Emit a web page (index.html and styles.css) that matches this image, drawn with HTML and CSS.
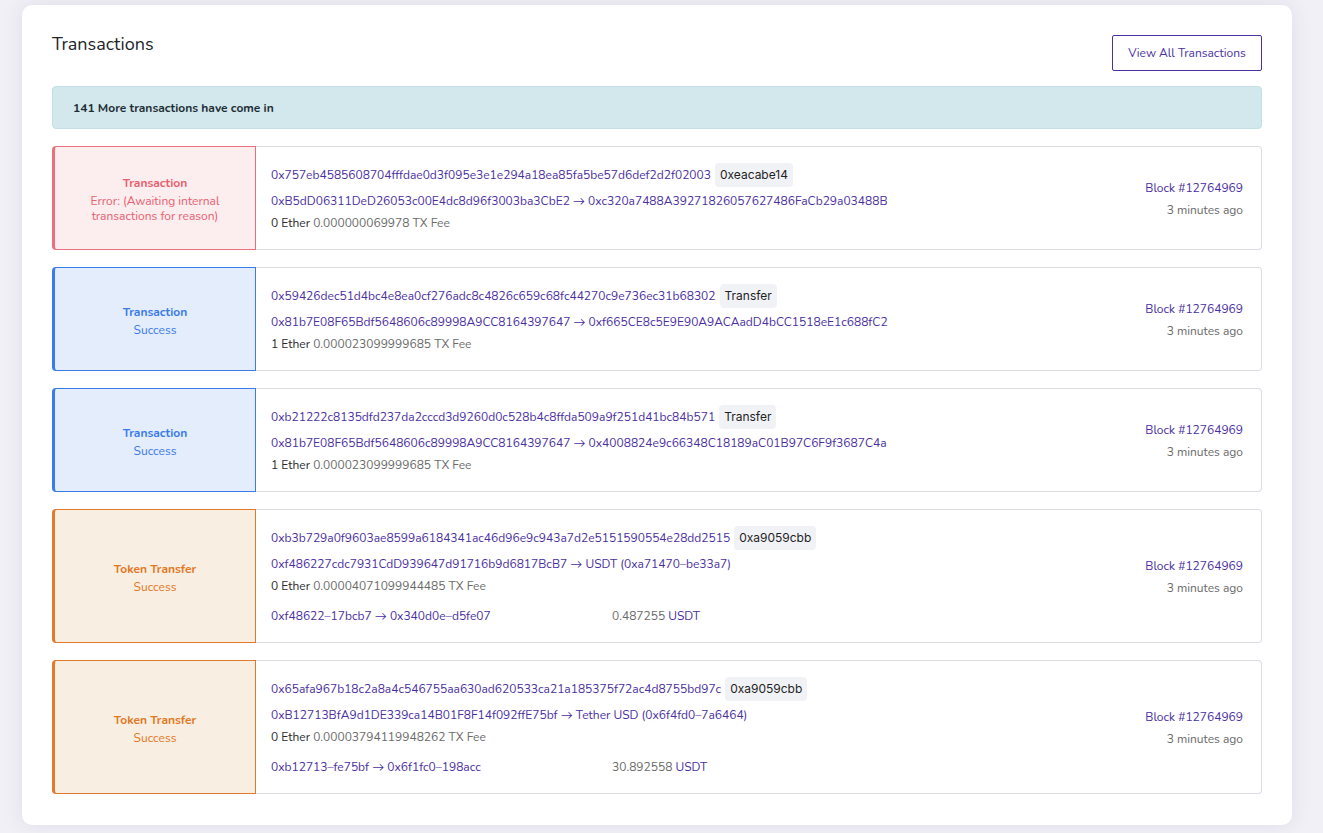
FILE: index.html
```html
<!DOCTYPE html>
<html>
<head>
<meta charset="utf-8">
<link rel="stylesheet" href="styles.css">
</head>
<body>
<div class="panel">
  <div class="header">
    <h1 class="title">Transactions</h1>
    <a class="btn">View All Transactions</a>
  </div>
  <div class="banner">141 More transactions have come in</div>

  <div class="tx">
    <div class="tile error">
      <div class="tile-title">Transaction</div>
      <div class="tile-status">Error: (Awaiting internal transactions for reason)</div>
    </div>
    <div class="body">
      <div class="main">
        <div class="row-hash"><a class="link">0x757eb4585608704fffdae0d3f095e3e1e294a18ea85fa5be57d6def2d2f02003</a><span class="pill">0xeacabe14</span></div>
        <div class="row"><a class="link">0xB5dD06311DeD26053c00E4dc8d96f3003ba3CbE2</a> <span class="arrow">&rarr;</span> <a class="link">0xc320a7488A39271826057627486FaCb29a03488B</a></div>
        <div class="row"><span class="dark">0 Ether</span> <span class="gray">0.000000069978 TX Fee</span></div>
      </div>
      <div class="side">
        <a class="link">Block #12764969</a>
        <div class="gray">3 minutes ago</div>
      </div>
    </div>
  </div>

  <div class="tx">
    <div class="tile ok">
      <div class="tile-title">Transaction</div>
      <div class="tile-status">Success</div>
    </div>
    <div class="body">
      <div class="main">
        <div class="row-hash"><a class="link">0x59426dec51d4bc4e8ea0cf276adc8c4826c659c68fc44270c9e736ec31b68302</a><span class="pill">Transfer</span></div>
        <div class="row"><a class="link">0x81b7E08F65Bdf5648606c89998A9CC8164397647</a> <span class="arrow">&rarr;</span> <a class="link">0xf665CE8c5E9E90A9ACAadD4bCC1518eE1c688fC2</a></div>
        <div class="row"><span class="dark">1 Ether</span> <span class="gray">0.000023099999685 TX Fee</span></div>
      </div>
      <div class="side">
        <a class="link">Block #12764969</a>
        <div class="gray">3 minutes ago</div>
      </div>
    </div>
  </div>

  <div class="tx">
    <div class="tile ok">
      <div class="tile-title">Transaction</div>
      <div class="tile-status">Success</div>
    </div>
    <div class="body">
      <div class="main">
        <div class="row-hash"><a class="link">0xb21222c8135dfd237da2cccd3d9260d0c528b4c8ffda509a9f251d41bc84b571</a><span class="pill">Transfer</span></div>
        <div class="row"><a class="link">0x81b7E08F65Bdf5648606c89998A9CC8164397647</a> <span class="arrow">&rarr;</span> <a class="link">0x4008824e9c66348C18189aC01B97C6F9f3687C4a</a></div>
        <div class="row"><span class="dark">1 Ether</span> <span class="gray">0.000023099999685 TX Fee</span></div>
      </div>
      <div class="side">
        <a class="link">Block #12764969</a>
        <div class="gray">3 minutes ago</div>
      </div>
    </div>
  </div>

  <div class="tx">
    <div class="tile token">
      <div class="tile-title">Token Transfer</div>
      <div class="tile-status">Success</div>
    </div>
    <div class="body">
      <div class="main">
        <div class="row-hash"><a class="link">0xb3b729a0f9603ae8599a6184341ac46d96e9c943a7d2e5151590554e28dd2515</a><span class="pill">0xa9059cbb</span></div>
        <div class="row"><a class="link">0xf486227cdc7931CdD939647d91716b9d6817BcB7</a> <span class="arrow">&rarr;</span> <a class="link">USDT (0xa71470&ndash;be33a7)</a></div>
        <div class="row"><span class="dark">0 Ether</span> <span class="gray">0.00004071099944485 TX Fee</span></div>
        <div class="token-row">
          <div class="token-addr"><a class="link">0xf48622&ndash;17bcb7</a> <span class="arrow">&rarr;</span> <a class="link">0x340d0e&ndash;d5fe07</a></div>
          <div><span class="gray">0.487255</span> <a class="link">USDT</a></div>
        </div>
      </div>
      <div class="side">
        <a class="link">Block #12764969</a>
        <div class="gray">3 minutes ago</div>
      </div>
    </div>
  </div>

  <div class="tx">
    <div class="tile token">
      <div class="tile-title">Token Transfer</div>
      <div class="tile-status">Success</div>
    </div>
    <div class="body">
      <div class="main">
        <div class="row-hash"><a class="link">0x65afa967b18c2a8a4c546755aa630ad620533ca21a185375f72ac4d8755bd97c</a><span class="pill">0xa9059cbb</span></div>
        <div class="row"><a class="link">0xB12713BfA9d1DE339ca14B01F8F14f092ffE75bf</a> <span class="arrow">&rarr;</span> <a class="link">Tether USD (0x6f4fd0&ndash;7a6464)</a></div>
        <div class="row"><span class="dark">0 Ether</span> <span class="gray">0.00003794119948262 TX Fee</span></div>
        <div class="token-row">
          <div class="token-addr"><a class="link">0xb12713&ndash;fe75bf</a> <span class="arrow">&rarr;</span> <a class="link">0x6f1fc0&ndash;198acc</a></div>
          <div><span class="gray">30.892558</span> <a class="link">USDT</a></div>
        </div>
      </div>
      <div class="side">
        <a class="link">Block #12764969</a>
        <div class="gray">3 minutes ago</div>
      </div>
    </div>
  </div>
</div>
</body>
</html>
```

FILE: styles.css
```css
* { box-sizing: border-box; }
html, body { margin: 0; padding: 0; }
body {
  background: #f1f0f6;
  font-family: "Nunito", "Lato", "Noto Sans", sans-serif;
  font-size: 12px;
  color: #333;
  height: 833px;
  overflow: hidden;
}
.panel {
  margin: 5px 0 0 22px;
  width: 1270px;
  height: 820px;
  background: #fff;
  border-radius: 10px;
  padding: 30px 30px;
  box-shadow: 0 0 18px rgba(200, 198, 222, 0.45);
}
.header {
  display: flex;
  justify-content: space-between;
  align-items: flex-start;
  height: 36px;
}
.title {
  margin: 0;
  font-size: 18px;
  font-weight: 400;
  line-height: 18px;
  color: #212529;
}
.btn {
  display: block;
  height: 36px;
  width: 150px;
  border: 1px solid #4b32a3;
  border-radius: 2px;
  color: #4b32a3;
  font-size: 12px;
  line-height: 34px;
  text-align: center;
}
.banner {
  margin-top: 15px;
  height: 43px;
  line-height: 41px;
  background: #d3e8ec;
  border: 1px solid #c2e0e6;
  border-radius: 4px;
  padding: 1px 20px 0;
  font-weight: 700;
  color: #1e2e36;
}
.tx {
  display: flex;
  margin-top: 17px;
}
.tile {
  width: 204px;
  flex: none;
  display: flex;
  flex-direction: column;
  justify-content: center;
  align-items: center;
  text-align: center;
  border: 1px solid;
  border-left-width: 3px;
  border-radius: 4px 0 0 4px;
  padding: 2px 24px 0;
}
.tile-title { font-weight: 700; line-height: 18px; }
.tile-status { line-height: 15px; margin-top: 2px; }
.tile.error { background: #fcedef; border-color: #e9707c; color: #e8606f; }
.tile.ok { background: #e3edfc; border-color: #3a7ce9; color: #3a7be8; }
.tile.token { background: #f9eee2; border-color: #e3792a; color: #e17822; }
.body {
  flex: 1;
  display: flex;
  align-items: center;
  border: 1px solid #dcdce3;
  border-left: none;
  border-radius: 0 4px 4px 0;
  padding: 16px 18px 15px 15px;
}
.main { flex: 1; }
.row-hash {
  display: flex;
  align-items: center;
  height: 24px;
}
.row { line-height: 22px; }
.row-hash + .row { margin-top: 3px; }
.link { color: #4a2f9f; text-decoration: none; }
.arrow { color: #4a2f9f; }
.dark { color: #2a2a2a; }
.gray { color: #6a6a6a; }
.pill {
  margin-left: 4px;
  background: #f1f2f6;
  border-radius: 4px;
  height: 24px;
  line-height: 24px;
  padding: 0 5px;
  font-family: "Inter", "Noto Sans", sans-serif;
  font-size: 12px;
  color: #1f1f1f;
}
.token-row {
  display: flex;
  margin-top: 8px;
  line-height: 22px;
}
.token-addr { width: 341px; }
.side {
  text-align: right;
  line-height: 22px;
}
```
